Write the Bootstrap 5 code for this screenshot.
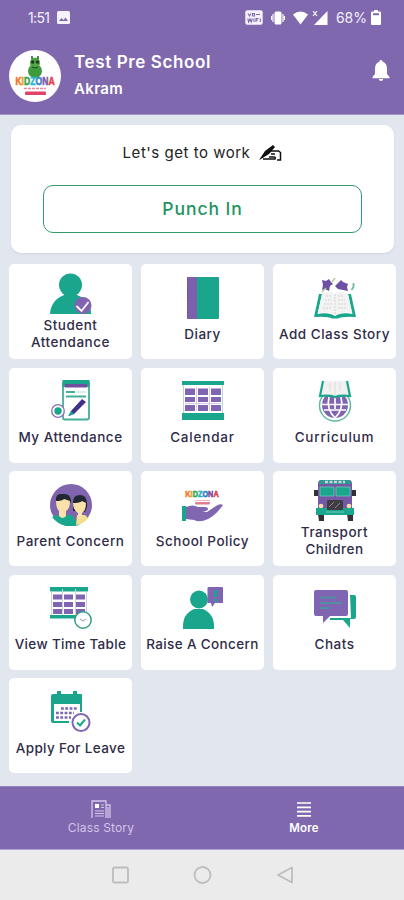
<!DOCTYPE html>
<html lang="en">
<head>
<meta charset="utf-8">
<meta name="viewport" content="width=device-width, initial-scale=1">
<title>Test Pre School</title>
<link href="https://cdn.jsdelivr.net/npm/bootstrap@5.3.0/dist/css/bootstrap.min.css" rel="stylesheet">
<style>
:root{--violet:#8068ae;--teal:#1aa68c;--ink:#302c48}
body{font-family:Inter,"Liberation Sans",sans-serif;background:#e1e6ef;height:900px;overflow:hidden}
svg{display:block;flex:none}
.top-area{background:var(--violet);height:115px;border-bottom:1px solid #a493cb}
.status-row{height:35px;padding:0 23px 0 28px;font-size:14px;color:#f3effa}
.clock{letter-spacing:-.65px}
.profile-row{height:79px;padding:2px 13px 0 9px}
.logo-disc{width:52px;height:52px}
.names{padding-left:13px}
.bell{margin-bottom:9px}
.brand-word{letter-spacing:0}
.school-name{font-size:17px;font-weight:600;line-height:22px;letter-spacing:.62px;margin-top:-2px}
.user-name{font-size:15px;font-weight:600;line-height:20px;letter-spacing:.35px;margin-top:6px}
.work-card{margin:10px 10px 0 11px;height:128px;border-radius:10px;padding:18px 32px 0;box-shadow:0 1px 2px #cfd6e3}
.work-title{font-size:15px;line-height:20px;letter-spacing:.52px;color:#222;height:20px}
.punch,.punch:hover{height:48px;border:1.5px solid #329b6c;border-radius:10px;color:#23935f;font-size:17.5px;font-weight:500;letter-spacing:.95px;margin-top:22px;padding:1px 0 0}
.tiles{display:grid;grid-template-columns:repeat(3,123px);column-gap:9px;row-gap:8.5px;padding:11px 0 0 9px}
.tile{height:95px;border-radius:5px;padding-top:12.5px;color:var(--ink);font-size:13.5px;font-weight:500;line-height:17px;letter-spacing:.5px;white-space:nowrap;text-align:center}
.tile span{margin-top:7px}
.tile.two{padding-top:9px}
.tile.two span{margin-top:1.5px}
.tile.snug{letter-spacing:.35px}
.tile.airy{letter-spacing:.8px}
.bottom-nav{top:786px;height:64px;background:var(--violet);border-top:1px solid #9382bd;border-bottom:1px solid #b3a3d4}
.tab{font-size:12px;line-height:16px;letter-spacing:.15px;color:#d2c5e8;padding-top:13px}
.tab span{margin-top:1px}
.tab.on{color:#fff;font-weight:600;font-size:11.5px;padding-left:2px}
.sys{top:850px;height:50px;background:#ebebeb}
</style>
<script src="https://cdn.jsdelivr.net/npm/bootstrap@5.3.0/dist/js/bootstrap.bundle.min.js"></script>
</head>
<body>
<header class="top-area">
  <div class="status-row d-flex align-items-center">
    <span class="clock">1:51</span>
    <svg class="ms-2" width="13" height="13" viewBox="0 0 13 13"><rect width="13" height="13" rx="1.5" fill="#f6f2fb"/><path d="M2 10 4.5 7l2 2L8.5 6.5 11 10z" fill="#8068ae"/></svg>
    <div class="ms-auto d-flex align-items-center">
      <svg class="me-1" width="18" height="15" viewBox="0 0 18 15"><rect x=".3" y=".3" width="17.4" height="14.4" rx="2" fill="#f6f2fb"/><path d="M3 3.500 4.500 6 6 3.500M7.500 3.500h2v2.500h-2zM11 4.500h4M2.700 8.500l1 3.500L5 9l1.300 3 1-3.500M9 8.500V12M11 12V8.500h2.500M11 10h2M15.300 8.500v3.500" fill="none" stroke="#8068ae" stroke-width="1.100"/></svg>
      <svg class="ms-1" width="14" height="14" viewBox="0 0 14 14"><rect x="3.500" y=".5" width="7" height="13" rx="1.500" fill="#fff"/><path d="M2 3v8M12 3v8M.5 5v4M13.500 5v4" stroke="#fff" stroke-width="1.200"/></svg>
      <svg class="ms-2" width="15" height="14" viewBox="0 0 15 14"><path d="M0 3.500Q7.500-2.500 15 3.500L7.500 13.500z" fill="#fff"/></svg>
      <svg class="ms-1" width="16" height="16" viewBox="0 0 16 16"><path d="M15.500 1v14H2z" fill="#fff"/><path d="m1 1 4 5M5 1 1 6" stroke="#fff" stroke-width="1.200"/></svg>
      <span class="ms-2">68%</span>
      <svg class="ms-1" width="10" height="15" viewBox="0 0 10 15"><path d="M3 0h4v1.500h2Q10 1.500 10 2.500V14q0 1-1 1H1q-1 0-1-1V2.500Q0 1.500 1 1.500h2z" fill="#fff"/><path d="M2 3.200h6v2H2z" fill="#8068ae"/></svg>
    </div>
  </div>
  <div class="profile-row d-flex align-items-center text-white">
    <div class="logo-disc rounded-circle bg-white d-flex justify-content-center align-items-center">
      <svg width="52" height="52" viewBox="0 0 52 52"><ellipse cx="26" cy="21" rx="7" ry="7" fill="#3f9b3e"/><ellipse cx="26" cy="13" rx="5" ry="5.500" fill="#51a544"/><path d="M23 9V6M29 9V6" stroke="#285c2c" stroke-width="1.500"/><circle cx="23.700" cy="12" r="1.700" fill="#183b20"/><circle cx="28.500" cy="12" r="1.700" fill="#183b20"/><path d="M23 17q3 2 6 0" stroke="#184522" fill="none"/>
      <g transform="translate(26 35) scale(.86 1.18)"><text class="brand-word" text-anchor="middle" font-family="Liberation Sans, sans-serif" font-weight="700" font-size="10" stroke-width=".5"><tspan fill="#ef7627" stroke="#ef7627">K</tspan><tspan fill="#e2a127" stroke="#e2a127">I</tspan><tspan fill="#35a84b" stroke="#35a84b">D</tspan><tspan fill="#25b7cf" stroke="#25b7cf">Z</tspan><tspan fill="#3a80ca" stroke="#3a80ca">O</tspan><tspan fill="#8057a8" stroke="#8057a8">N</tspan><tspan fill="#e84049" stroke="#e84049">A</tspan></text></g><path d="M15 38.500h22" stroke="#e58b9e" stroke-width="1.300" stroke-dasharray="3 1"/><rect x="16" y="41.500" width="21" height="3.500" rx="1" fill="#e3436b"/></svg>
    </div>
    <div class="names"><div class="school-name">Test Pre School</div><div class="user-name">Akram</div></div>
    <svg class="bell ms-auto" width="20" height="24" viewBox="0 0 20 24"><path d="M10 1q1.500 0 1.800 1.800Q16 4 16 10v5l2.500 3v1.200h-17V18L4 15v-5q0-6 4.200-7.200Q8.500 1 10 1zM7.800 20h4.400q-.4 2-2.200 2t-2.200-2z" fill="#fff"/></svg>
  </div>
</header>
<main>
  <section class="work-card bg-white">
    <div class="work-title d-flex justify-content-center align-items-center">Let's get to work
      <svg class="ms-2" width="24" height="18" viewBox="0 0 24 18"><path d="M1 16 7 7 15 1 17 3 11 10 3 15z" fill="#111"/><path d="M7 11l6-4h7.500l2 1.500V16h-3.500M5 15h12q1-2-1-2h-5M13 10h4" fill="none" stroke="#111" stroke-width="1.500"/></svg>
    </div>
    <button class="btn punch w-100">Punch In</button>
  </section>
  <section class="tiles">
    <div class="tile two bg-white d-flex flex-column align-items-center">
      <svg width="42" height="42" viewBox="0 0 42 42"><circle cx="20.500" cy="12" r="11.500" fill="#1aa68c"/><path d="M0 41Q1 27 14 22h13q14 5 14 19z" fill="#1aa68c"/><circle cx="33" cy="32.500" r="8.500" fill="#8063b1"/><path d="m26.500 33 5 5 7-9" fill="none" stroke="#fff" stroke-width="1.800"/></svg>
      <span>Student<br>Attendance</span></div>
    <div class="tile bg-white d-flex flex-column align-items-center">
      <svg width="42" height="42" viewBox="0 0 42 42"><rect x="5" width="32" height="42" rx="1" fill="#1aa68c"/><path d="M6 0h9v42H6q-1 0-1-1V1q0-1 1-1z" fill="#7d5fae"/><path d="M5.500 2v38" stroke="#665580" stroke-dasharray="1.500 1.500"/></svg>
      <span>Diary</span></div>
    <div class="tile bg-white d-flex flex-column align-items-center">
      <svg width="42" height="42" viewBox="0 0 42 42"><path d="M5 17h3L3.500 37Q15 35 21 39q6-4 17.500-2L34 17h3l5 23q-14-1-18 1.500h-6Q14 39 0 40z" fill="#1aa68c"/><path d="M8 17q8-5 13 0 5-5 13 0l4 19q-11-2-17 3-6-5-17-3z" fill="#f3f3f3"/><path d="M21 17v20M12 19h6M11 23h7M10 27h8M9 31h9M24 19h6M24 23h7M24 27h8M24 31h9" stroke="#d3d3d3" stroke-dasharray="2 1"/><path d="M8 3l4 1 3-2 2 3 2 2-3 2-1 5-4-2-3 1 1-5zM21 9l6-6 2 2 5 2-1 3 1 4-5-1-5-1z" fill="#6c51a5"/><path d="m8 15 4-4M18 5l3-4" stroke="#b3cf9d" stroke-width="1.500"/><path d="M39.500 6v4l-2 3" fill="none" stroke="#6bb9aa" stroke-width="1.800"/></svg>
      <span>Add Class Story</span></div>

    <div class="tile bg-white d-flex flex-column align-items-center">
      <svg width="42" height="42" viewBox="0 0 42 42"><rect x="13" y="1.500" width="26" height="38" rx="2" fill="#fff" stroke="#43af99" stroke-width="1.800"/><path d="M12.500 0h27v7h-27z" fill="#1aa68c"/><path d="M15 4h22v3.500H15z" fill="#72509f"/><path d="M16 12h9M16 16.500h20" stroke="#43af99" stroke-width="2"/><path d="M26 12h10" stroke="#b7dcd5"/><circle cx="8" cy="31" r="6.300" fill="#fff" stroke="#8b70b7" stroke-width="1.300"/><circle cx="8" cy="31" r="3.700" fill="#1aa68c"/><path d="m32 19 4 3-12 12-5 2 2-5z" fill="#42318a"/><path d="m21 31 3 3-6 2z" fill="#1aa68c"/></svg>
      <span>My Attendance</span></div>
    <div class="tile airy bg-white d-flex flex-column align-items-center">
      <svg width="42" height="42" viewBox="0 0 42 42"><path d="M0 1h42v4H0zM0 33h42v7H0z" fill="#1aa68c"/><path d="M1.500 5v28M40.500 5v28" stroke="#b6d8d1"/><path d="M3 8.500h10V15H3zm13 0h10V15H16zm13 0h10V15H29zM3 17h10v5H3zm13 0h10v5H16zm13 0h10v5H29zM3 25h10v6H3zm13 0h10v6H16zm13 0h10v6H29z" fill="#8065b3"/><path d="M3 23.500h36M14.500 7v24M27.500 7v24" stroke="#d7cde7"/></svg>
      <span>Calendar</span></div>
    <div class="tile airy bg-white d-flex flex-column align-items-center">
      <svg width="42" height="42" viewBox="0 0 42 42"><circle cx="21" cy="25.500" r="15.500" fill="#fff" stroke="#62b9a6" stroke-width="1.500"/><circle cx="21" cy="25" r="13" fill="#8065b3"/><path d="M8 24.500h27M10 30h22M21 17v12M15 17q-3 12 6 21M27 17q3 12-6 21" stroke="#fff" stroke-width="1.700" fill="none"/><path d="M9 1 6 16q10-1 15 1 5-2 15-1L33 1z" fill="#f1f1f1"/><path d="M9 1 6 16q10-1 15 1 5-2 15-1L33 1" fill="none" stroke="#1aa68c" stroke-width="2.200"/><path d="M21 2v13M16 3v8M26 3v8" stroke="#ddd"/></svg>
      <span>Curriculum</span></div>

    <div class="tile bg-white d-flex flex-column align-items-center">
      <svg width="42" height="42" viewBox="0 0 42 42"><circle cx="21" cy="21" r="21" fill="#8064ae"/><path d="M2 33q7-3 11-2h9l7 10Q12 46 2 33z" fill="#1aa68c"/><path d="M27 31h8l3 3q-4 6-12 7z" fill="#f4df8c"/><path d="M6 17Q5 9 13 10q8-1 8 8l-2 2H6zM23 18q0-7 7-7 8 0 7 12l-2 5-12-1z" fill="#222831"/><path d="M6 17q6 0 8-2l6 2q0 8-4 10v5q-3 4-7 0v-5q-3-3-3-10zM23 19q7 0 9-2l4 2q0 8-4 10v5l-4 1v-6q-5-3-5-10z" fill="#fae0a9"/></svg>
      <span>Parent Concern</span></div>
    <div class="tile bg-white d-flex flex-column align-items-center">
      <svg width="42" height="42" viewBox="0 0 42 42"><g transform="translate(20 13) scale(.86 1.15)"><text class="brand-word" text-anchor="middle" font-family="Liberation Sans, sans-serif" font-weight="700" font-size="8.500" stroke-width=".5"><tspan fill="#f07b30" stroke="#f07b30">K</tspan><tspan fill="#d7a51e" stroke="#d7a51e">I</tspan><tspan fill="#30a74a" stroke="#30a74a">D</tspan><tspan fill="#24b3c0" stroke="#24b3c0">Z</tspan><tspan fill="#287cbf" stroke="#287cbf">O</tspan><tspan fill="#8045a0" stroke="#8045a0">N</tspan><tspan fill="#df3845" stroke="#df3845">A</tspan></text></g><path d="M13 16.500h15" stroke="#eeb2bf"/><rect x="13" y="18" width="15" height="2.500" rx="1" fill="#e27c93"/><path d="M0 22h4v15H0z" fill="#1aa68c"/><path d="M4 23q7-3 12 0h7q3 0 3 2t-6 3h5l9-6q4-3 7-1-7 10-15 14-8 4-14 1l-8-1z" fill="#8065b0"/></svg>
      <span>School Policy</span></div>
    <div class="tile two bg-white d-flex flex-column align-items-center">
      <svg width="42" height="42" viewBox="0 0 42 42"><path d="M4 34h6v7H5zM33 34h6v7h-5zM0 10h4v6H0zM38 10h4v6h-4z" fill="#343039"/><path d="M7 0h28q3 0 3 4v26H4V4q0-4 3-4z" fill="#7558a5"/><path d="M5 2q1-2 3-2h26q3 0 3 4H5z" fill="#299d8b"/><path d="M11 2h20" stroke="#d5cce6" stroke-width="2.500" stroke-dasharray="3 1.500"/><path d="M6 7h14v9H6zM22 7h14v9H22z" fill="#1aa68c" stroke="#78cbbd" stroke-width=".7"/><path d="M2 28h38v7H2z" fill="#1aa68c"/><rect x="13" y="20" width="16" height="10" rx="1" fill="#3f3c44"/><path d="m15 27 5-5m1 6 5-5" stroke="#8b8790"/><circle cx="7" cy="26" r="2.300" fill="#f7dfa5"/><circle cx="35" cy="26" r="2.300" fill="#f7dfa5"/><path d="M12 32h18" stroke="#70c6b7"/></svg>
      <span>Transport<br>Children</span></div>

    <div class="tile snug bg-white d-flex flex-column align-items-center">
      <svg width="42" height="42" viewBox="0 0 42 42"><path d="M0 0h38v4.500H0zM0 28h27v3.500H0z" fill="#1aa68c"/><path d="M1.500 4v24M36.500 4v24M12.500 2v26M25.500 2v26" stroke="#c9d5df"/><path d="M3 7.500h9v5H3zm11 0h9v5h-9zm12 0h9v5h-9zM3 15h9v5H3zm11 0h9v5h-9zm12 0h9v5h-9zM3 22h9v5H3zm11 0h9v5h-9zm12 0h9v5h-9z" fill="#8065b3"/><circle cx="33" cy="33" r="8.200" fill="#fff" stroke="#359f89" stroke-width="1.500"/><path d="m30 32 3 2 3-2" fill="none" stroke="#aab8b4" stroke-width="1.300"/></svg>
      <span>View Time Table</span></div>
    <div class="tile snug bg-white d-flex flex-column align-items-center">
      <svg width="42" height="42" viewBox="0 0 42 42"><circle cx="17" cy="12.500" r="9" fill="#1aa68c"/><path d="M1 42q-1-15 11-20h9q12 5 11 20z" fill="#1aa68c"/><path d="M25.500 1q0-1 1-1H40q1 0 1 1v15H33l-3 4-1-4h-3.500z" fill="#8065b3"/><path d="M33.500 3v7M33.500 12v2.500" stroke="#1aa68c" stroke-width="3"/></svg>
      <span>Raise A Concern</span></div>
    <div class="tile bg-white d-flex flex-column align-items-center">
      <svg width="42" height="42" viewBox="0 0 42 42"><path d="M36 8h4q2 0 2 2v20q0 2-2 2h-4v9l-7-8H16v-2h21z" fill="#1aa68c"/><path d="M2 3h30q2 0 2 2v22q0 2-2 2H16l-7 7v-7H2q-2 0-2-2V5q0-2 2-2z" fill="#8065b3"/><path d="M6 10.500h16M6 16h22M6 21h10" stroke="#508ea2" stroke-width="2"/></svg>
      <span>Chats</span></div>

    <div class="tile snug bg-white d-flex flex-column align-items-center">
      <svg width="42" height="42" viewBox="0 0 42 42"><path d="M3 3h4V0h4v3h12V0h4v3h4q1 0 1 1v17h-2V13H4v17h15v2H3q-2 0-2-2V5q0-2 2-2z" fill="#1aa68c"/><path d="M11 17.500h16M6 22h18M6 26.500h15" stroke="#8065b3" stroke-width="2.600" stroke-dasharray="2.800 1.500"/><circle cx="31" cy="31.500" r="8.500" fill="#fff" stroke="#8065b3" stroke-width="2"/><path d="m27 31.500 3 3 5-6" fill="none" stroke="#1aa68c" stroke-width="2"/></svg>
      <span>Apply For Leave</span></div>
  </section>
</main>
<nav class="bottom-nav fixed-bottom d-flex">
  <div class="tab w-50 d-flex flex-column align-items-center">
    <svg width="20" height="19" viewBox="0 0 20 19"><path d="M1 18V1h14v17M15 5h4v13M17 7v11" fill="none" stroke="#d2c5e8" stroke-width="1.300"/><path d="M4 4h4v4H4z" fill="#fff"/><path d="M10 5h3M10 7.500h3M4 11h9M4 13.500h9M4 16h9" stroke="#d2c5e8" stroke-width="1.200"/></svg>
    <span>Class Story</span></div>
  <div class="tab on w-50 d-flex flex-column align-items-center">
    <svg width="20" height="19" viewBox="0 0 20 19"><path d="M3 3h14M3 7.300h14M3 11.600h14M3 15.900h14" stroke="#fff" stroke-width="1.700"/></svg>
    <span>More</span></div>
</nav>
<footer class="sys fixed-bottom d-flex justify-content-center align-items-center">
  <svg width="184" height="20" viewBox="0 0 184 20"><g fill="none" stroke="#bdbdbd" stroke-width="1.800" stroke-linejoin="round"><rect x="3" y="2.500" width="15" height="15" rx="1.500"/><circle cx="92.500" cy="10" r="8"/><path d="M182 2.500v15L168 10z"/></g></svg>
</footer>
</body>
</html>
